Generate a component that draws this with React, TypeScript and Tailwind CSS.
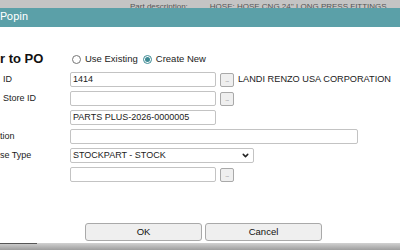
import { ChevronDown } from 'lucide-react';

const font = { fontFamily: '"Liberation Sans", Arial, sans-serif' };

function Dots() {
  return (
    <div className="w-[14px] h-[14px] ml-[4px] bg-[#efefef] border border-[#a9a9a9] rounded-[2px] flex items-end justify-center pb-[3px]">
      <span className="text-[6px] leading-none text-[#666] tracking-[-0.5px]">...</span>
    </div>
  );
}

function Input({ value = '', w = 'w-[146px]' }: { value?: string; w?: string }) {
  return (
    <div className={`${w} h-[15px] border border-[#c3c3c3] rounded-[2px] bg-white flex items-center px-[2px] text-[9px] text-[#222]`}>
      {value}
    </div>
  );
}

function Radio({ checked }: { checked?: boolean }) {
  return checked ? (
    <span className="w-[9px] h-[9px] rounded-full border border-[#3d8a94] bg-white flex items-center justify-center">
      <span className="w-[5px] h-[5px] rounded-full bg-[#3d8a94]" />
    </span>
  ) : (
    <span className="w-[9px] h-[9px] rounded-full border border-[#767676] bg-white" />
  );
}

export default function App() {
  return (
    <div className="w-[400px] h-[250px] overflow-hidden bg-white relative" style={font}>
      {/* page behind the popin */}
      <div className="h-[8px] bg-[#c4c4c4] overflow-hidden flex whitespace-nowrap text-[8px] text-[#555] leading-none pt-[3px]">
        <span className="ml-[130px] shrink-0">Part description:</span>
        <span className="ml-[22px] shrink-0">HOSE: HOSE CNG 24'' LONG PRESS FITTINGS</span>
      </div>

      {/* title bar */}
      <div className="h-[19px] bg-[#5ba0a8] flex items-center text-white text-[11px]" style={{ fontFamily: 'Roboto, "Liberation Sans", sans-serif' }}>
        Popin
      </div>

      {/* body */}
      <div className="h-[216px] flex flex-col">
        <div className="mt-[25px] h-[14px] flex items-center">
          <div className="w-[72px] text-[13px] font-bold text-[#111]">r to PO</div>
          <label className="flex items-center gap-[4px] text-[9.5px] text-[#222]">
            <Radio />
            Use Existing
          </label>
          <label className="flex items-center gap-[4px] text-[9.5px] text-[#222] ml-[5px]">
            <Radio checked />
            Create New
          </label>
        </div>

        <div className="mt-[6px] grid grid-cols-[70px_1fr] gap-y-[4px] text-[9px] text-[#222]">
          <div className="h-[15px] flex items-center pl-[3px]">ID</div>
          <div className="h-[15px] flex items-center">
            <Input value="1414" />
            <Dots />
            <span className="ml-[4px] text-[9.2px]">LANDI RENZO USA CORPORATION</span>
          </div>

          <div className="h-[15px] flex items-center pl-[3px]">Store ID</div>
          <div className="h-[15px] flex items-center">
            <Input />
            <Dots />
          </div>

          <div className="h-[15px]" />
          <div className="h-[15px] flex items-center">
            <Input value="PARTS PLUS-2026-0000005" />
          </div>

          <div className="h-[15px] flex items-center">tion</div>
          <div className="h-[15px] flex items-center">
            <Input w="w-[288px]" />
          </div>

          <div className="h-[15px] flex items-center">se Type</div>
          <div className="h-[15px] flex items-center">
            <div className="w-[184px] h-[15px] border border-[#c3c3c3] rounded-[2px] bg-white flex items-center justify-between px-[2px] text-[9px] text-[#222]">
              STOCKPART - STOCK
              <ChevronDown size={9} strokeWidth={4} className="text-[#222] mr-[1px]" />
            </div>
          </div>

          <div className="h-[15px]" />
          <div className="h-[15px] flex items-center">
            <Input />
            <Dots />
          </div>
        </div>

        <div className="mt-[41px] flex gap-[3px] pl-[85px]">
          <button className="w-[117px] h-[18px] bg-[#efefef] border border-[#a9a9a9] rounded-[3px] text-[9.5px] text-[#111]">OK</button>
          <button className="w-[117px] h-[18px] bg-[#efefef] border border-[#a9a9a9] rounded-[3px] text-[9.5px] text-[#111]">Cancel</button>
        </div>
      </div>

      {/* page behind, bottom */}
      <div className="h-[7px] bg-gradient-to-b from-[#d2d2d2] to-[#9e9e9e] relative">
        <div className="absolute left-0 top-0 w-[37px] h-[1px] bg-[#555]" />
      </div>
    </div>
  );
}
